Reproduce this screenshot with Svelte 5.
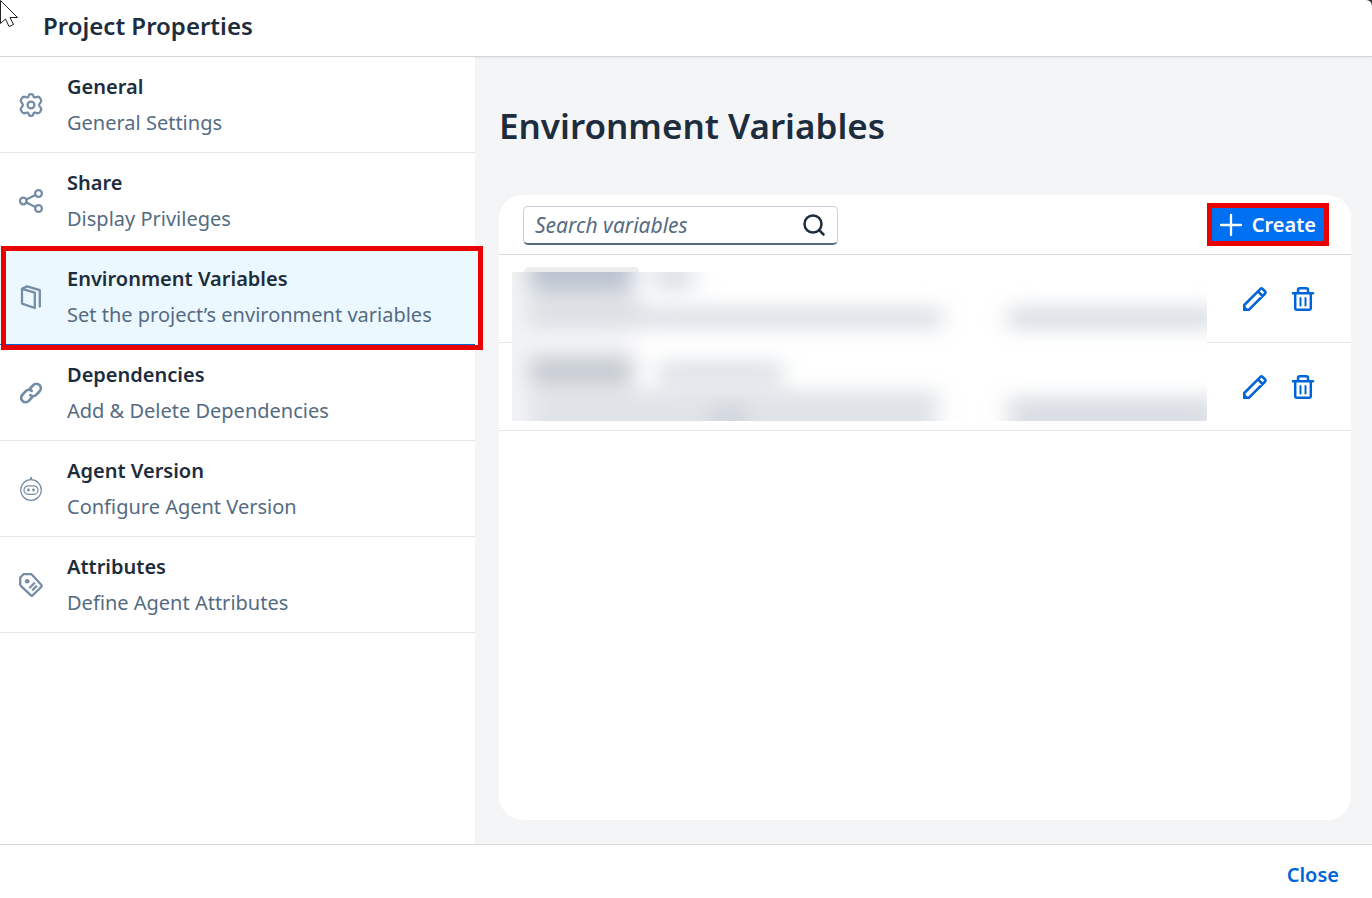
<script>
  const sections = [
    { icon: 'gear', title: 'General', text: 'General Settings' },
    { icon: 'share', title: 'Share', text: 'Display Privileges' },
    { icon: 'book', title: 'Environment Variables', text: 'Set the project’s environment variables' },
    { icon: 'link', title: 'Dependencies', text: 'Add & Delete Dependencies' },
    { icon: 'robot', title: 'Agent Version', text: 'Configure Agent Version' },
    { icon: 'tag', title: 'Attributes', text: 'Define Agent Attributes' }
  ];
  let selected = $state(2);
  let query = $state('');
</script>

{#snippet icon(name)}
  <svg class="icon" viewBox="0 0 24 24" aria-hidden="true">
    {#if name === 'gear'}
      <path d="M9.6 3.1Q10 1.2 12 1.2T14.4 3.1Q14.8 4.7 16.3 4.3L18.2 3.8Q20 3.4 21 5L22 6.8Q22.8 8.3 21.6 9.5L20.6 10.6Q19.5 12 20.6 13.4L21.6 14.5Q22.8 15.7 22 17.2L21 19Q20 20.6 18.2 20.2L16.3 19.7Q14.8 19.3 14.4 20.9Q14 22.8 12 22.8T9.6 20.9Q9.2 19.3 7.7 19.7L5.8 20.2Q4 20.6 3 19L2 17.2Q1.2 15.7 2.4 14.5L3.4 13.4Q4.5 12 3.4 10.6L2.4 9.5Q1.2 8.3 2 6.8L3 5Q4 3.4 5.8 3.8L7.7 4.3Q9.2 4.7 9.6 3.1Z" />
      <circle cx="12" cy="12" r="3.4" />
    {:else if name === 'share'}
      <circle cx="4.3" cy="12" r="3.3" /><circle cx="19.5" cy="4.5" r="3.4" /><circle cx="19.5" cy="19.5" r="3.4" />
      <path d="M7.3 10.5 16.4 6M7.3 13.5 16.4 18" />
    {:else if name === 'book'}
      <path d="M3 3.8 15.8 7.6V23L3 18.6ZM3 3.8 8 1.4 20.8 5.2V21.5" />
    {:else if name === 'link'}
      <path class="heavy" d="M11.2 7.5 14.2 4.1A4.4 4.4 0 0 1 20.6 10.2L17.4 13.6A4.4 4.4 0 0 1 11.3 14.1M12.8 16.5 9.8 19.9A4.4 4.4 0 0 1 3.4 13.8L6.6 10.4A4.4 4.4 0 0 1 12.7 9.9" />
    {:else if name === 'robot'}
      <g class="thin"><circle cx="12" cy="13" r="10.3" /><rect x="5" y="8.8" width="14" height="8.6" rx="4.2" /><path d="M12 2.7V0.8" /></g>
      <circle class="solid" cx="12" cy="1" r="1" /><circle class="solid" cx="9.5" cy="13" r="1.4" /><circle class="solid" cx="14.5" cy="13" r="1.4" />
    {:else if name === 'tag'}
      <path d="M1.2 4.5 4.5 1.2H12Q12.6 1.2 13 1.7L22.4 12Q23.2 12.9 22.4 13.8L13.8 22.3Q12.9 23.1 12 22.3L1.8 12.8Q1.2 12.2 1.2 11.5Z" />
      <circle class="solid" cx="8.2" cy="8.2" r="2.3" />
      <path d="M11 14.5 15.2 10.3M13.8 16.8 17.2 13.4" />
    {/if}
  </svg>
{/snippet}

<div class="dialog">
  <header><h1>Project Properties</h1></header>

  <div class="body">
    <nav aria-label="Project sections">
      {#each sections as section, i}
        <button class="section" class:selected={selected === i} onclick={() => (selected = i)}>
          {@render icon(section.icon)}
          <span class="labels">
            <span class="title">{section.title}</span>
            <span class="text">{section.text}</span>
          </span>
          {#if i === 2}<span class="marker"></span>{/if}
        </button>
      {/each}
    </nav>

    <main>
      <h2>Environment Variables</h2>
      <section class="panel">
        <div class="toolbar">
          <label class="search">
            <input type="text" placeholder="Search variables" aria-label="Search variables" bind:value={query} />
            <svg viewBox="0 0 24 24" aria-hidden="true"><circle cx="11" cy="11" r="8.5" /><path d="M17.2 17.2 21.5 21.5" /></svg>
          </label>
          <button class="create">
            <svg viewBox="0 0 22 22" aria-hidden="true"><path d="M11 1V21M1 11H21" /></svg>
            Create
            <span class="marker"></span>
          </button>
        </div>
        <div class="variables">
          <ul>
            {#each [1, 2] as row}
              <li>
                <button class="action" aria-label="Edit variable {row}">
                  <svg viewBox="0 0 24 24" aria-hidden="true">
                    <path d="M1.3 22.7V18L17.5 1.8Q18.5 1 19.5 1.8L22.2 4.5Q23 5.5 22.2 6.5L6 22.7Z M15 4.4 19.6 9" />
                    <path class="fill" d="M0 17.5 6.5 24H1Q0 24 0 23Z" />
                  </svg>
                </button>
                <button class="action" aria-label="Delete variable {row}">
                  <svg viewBox="0 0 24 24" aria-hidden="true">
                    <path d="M2 6.2H22M4.2 6.2V21Q4.2 22.8 6 22.8H18Q19.8 22.8 19.8 21V6.2M7 6V3Q7 1.2 8.8 1.2H15.2Q17 1.2 17 3V6" />
                    <path class="slats" d="M9.5 11V18.5M14.5 11V18.5" />
                  </svg>
                </button>
              </li>
            {/each}
          </ul>
          <span class="tag"></span>
          <svg class="redacted" viewBox="0 0 695 149" preserveAspectRatio="none" aria-hidden="true">
            <defs><filter id="haze" x="-20%" y="-100%" width="140%" height="300%" color-interpolation-filters="sRGB"><feGaussianBlur stdDeviation="11 9" /></filter></defs>
            <rect width="695" height="149" fill="#fff" />
            <g filter="url(#haze)">
              <rect x="-30" y="-20" width="150" height="190" fill="#f2f3f5" />
              <rect x="18" y="-24" width="104" height="44" fill="#bdc4d0" />
              <rect x="140" y="-20" width="42" height="40" fill="#e0e4e8" />
              <rect x="16" y="24" width="114" height="32" fill="#dde1e5" />
              <rect x="130" y="34" width="300" height="24" fill="#dfe2e7" />
              <rect x="496" y="34" width="210" height="24" fill="#dce0e5" />
              <rect x="18" y="84" width="104" height="30" fill="#c8cdd3" />
              <rect x="145" y="88" width="126" height="26" fill="#e0e4e8" />
              <rect x="18" y="118" width="408" height="60" fill="#e0e4e8" />
              <rect x="200" y="130" width="34" height="44" fill="#d3d7de" />
              <rect x="496" y="124" width="210" height="54" fill="#dbdfe5" />
            </g>
          </svg>
        </div>
      </section>
    </main>
  </div>

  <footer><button class="close">Close</button></footer>
  <svg class="pointer" viewBox="0 0 19 28" aria-hidden="true"><path d="M.5 .5V23.5L5.5 19 9 26.5 13.5 24.5 10 17.5H17.5Z" /></svg>
</div>

<style>
  :global(body) { margin: 0; background: #33383d; }
  .dialog {
    position: relative;
    display: flex;
    flex-direction: column;
    min-height: 100vh;
    overflow: hidden;
    border-top-right-radius: 6px;
    background: #fff;
    color: #1d2d3e;
    font-family: "Noto Sans", "Open Sans", sans-serif;
    font-size: 20px;
    line-height: 36px;
  }
  button { margin: 0; border: 0; font: inherit; cursor: pointer; }
  h1, h2 { margin: 0; font-weight: 600; }
  header {
    position: relative;
    box-sizing: border-box;
    height: 57px;
    padding: 8px 43px;
    border-bottom: 1px solid #d3d5d7;
    box-shadow: 0 1px 2px #0001;
  }
  h1 { font-size: 24px; line-height: 36px; }
  .body { display: flex; flex: 1; }
  nav { flex: none; width: clamp(280px, 35vw, 475px); }
  .section {
    position: relative;
    display: flex;
    align-items: center;
    gap: 24px;
    box-sizing: border-box;
    width: 100%;
    height: 96px;
    padding: 0 19px;
    border-bottom: 1px solid #e5e5e5;
    background: #fff;
    color: inherit;
    text-align: left;
  }
  .section.selected { background: #ebf8ff; border-bottom-color: #0064d9; }
  .icon { flex: none; width: 24px; height: 24px; }
  .icon, .search svg, .create svg, .action svg { fill: none; stroke: currentColor; stroke-width: 2.3; stroke-linecap: round; stroke-linejoin: round; overflow: visible; }
  .icon { color: #758ca5; }
  .thin { stroke-width: 1.2; }
  .heavy { stroke-width: 2.7; }
  .solid { fill: currentColor; stroke: none; }
  .labels { display: flex; flex-direction: column; }
  .title { font-weight: 600; }
  .text { color: #556b82; white-space: nowrap; }
  .marker { position: absolute; border: 5px solid #eb0000; pointer-events: none; }
  .section .marker { inset: -3px -8px -6px 1px; z-index: 1; }
  main {
    display: flex;
    flex: 1;
    flex-direction: column;
    gap: 42px;
    min-width: 0;
    padding: 42px 21px 24px 24px;
    background: #f4f5f7;
  }
  h2 { font-size: 35px; line-height: 54px; }
  .panel { flex: 1; border-radius: 24px; background: #fff; }
  .toolbar {
    display: flex;
    align-items: flex-start;
    justify-content: space-between;
    box-sizing: border-box;
    height: 60px;
    padding: 11px 25px 0 24px;
    border-bottom: 1px solid #d5d7d9;
  }
  .search {
    display: flex;
    align-items: center;
    box-sizing: border-box;
    width: 315px;
    height: 39px;
    padding: 0 11px;
    border: 1px solid #c8d0d9;
    border-bottom: 2px solid #556b82;
    border-radius: 5px;
  }
  .search svg { flex: none; width: 24px; height: 24px; stroke-width: 2.5; }
  input { flex: 1; min-width: 0; padding: 0; border: 0; outline: 0; background: none; color: inherit; font: inherit; font-size: 21px; line-height: 30px; }
  input::placeholder { color: #556b82; font-style: italic; opacity: 1; }
  .create {
    position: relative;
    display: flex;
    align-items: center;
    gap: 10px;
    height: 37px;
    padding: 0 10px;
    border-radius: 4px;
    background: #0070f2;
    color: #fff;
    font-weight: 600;
  }
  .create svg { width: 22px; height: 22px; }
  .create .marker { inset: -3px; }
  .variables { position: relative; }
  ul { margin: 0; padding: 0; list-style: none; }
  li {
    display: flex;
    align-items: center;
    justify-content: flex-end;
    gap: 24px;
    box-sizing: border-box;
    height: 88px;
    padding: 0 36px;
    border-bottom: 1px solid #e5e5e5;
  }
  .action { display: flex; padding: 0; background: none; color: #0064d9; }
  .action svg { width: 24px; height: 24px; stroke-width: 2.5; }
  .action .slats { stroke-width: 2; }
  .action .fill { fill: currentColor; stroke: none; }
  .tag { position: absolute; top: 12px; left: 25px; width: 115px; height: 20px; border-radius: 5px; background: #ebecee; }
  .redacted { position: absolute; top: 17px; left: 13px; width: calc(100% - 157px); height: 149px; }
  footer {
    display: flex;
    align-items: center;
    justify-content: flex-end;
    box-sizing: border-box;
    height: 54px;
    padding: 6px 33px 0;
    border-top: 1px solid #d5d7d9;
  }
  .close { padding: 0; background: none; color: #0064d9; font-weight: 600; }
  .pointer { position: absolute; top: 0; left: 0; width: 19px; height: 28px; fill: #fff; stroke: #222; stroke-width: 1; }
</style>
